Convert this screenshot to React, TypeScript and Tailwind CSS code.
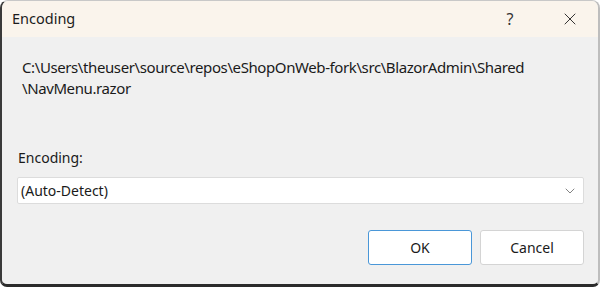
import { ChevronDown, X } from "lucide-react";

export default function App() {
  return (
    <div
      className="flex h-[287px] w-[600px] flex-col overflow-hidden rounded-t-[8px] rounded-b-[7px] border-t border-r-2 border-b-[3px] border-l-2 border-t-[#c8c8c8] border-r-[#bdbdbd] border-b-[#2b2b2b] border-l-[#3a3a3a] bg-[#f0f0f0] text-[14px] text-[#1a1a1a]"
      style={{ fontFamily: '"Segoe UI", "Noto Sans", sans-serif' }}
    >
      {/* Title bar */}
      <div className="flex h-[36px] shrink-0 items-center bg-[#faf4ec] pr-[5px] pl-[10px]">
        <span className="flex-1 text-[14.5px] text-[#1c1c1c]">Encoding</span>
        <span className="mr-[14px] w-[46px] text-center text-[16px] text-[#333]">?</span>
        <div className="flex w-[46px] items-center justify-center">
          <X size={20} strokeWidth={1.1} className="text-[#222]" />
        </div>
      </div>

      {/* Body */}
      <div className="flex flex-1 flex-col pr-[14px] pl-[15px]">
        <p className="mt-[20px] pl-[5px] text-[15px] leading-[21px] tracking-[-0.4px]">
          C:\Users\theuser\source\repos\eShopOnWeb-fork\src\BlazorAdmin\Shared
          <br />
          \NavMenu.razor
        </p>

        <label className="mt-[49px] pl-[1px] leading-[20px]">Encoding:</label>
        <div className="mt-[9px] flex h-[27px] items-center rounded-[2px] border border-[#dcdcdc] bg-white pr-[5px] pl-[3px]">
          <span className="flex-1">(Auto-Detect)</span>
          <ChevronDown size={16} strokeWidth={1.1} className="text-[#555]" />
        </div>

        <div className="mt-[26px] flex justify-end gap-[8px]">
          <button className="h-[35px] w-[104px] rounded-[3px] border border-[#4a97d8] bg-white">
            OK
          </button>
          <button className="h-[35px] w-[104px] rounded-[3px] border border-[#d4d4d4] bg-white">
            Cancel
          </button>
        </div>
      </div>
    </div>
  );
}
